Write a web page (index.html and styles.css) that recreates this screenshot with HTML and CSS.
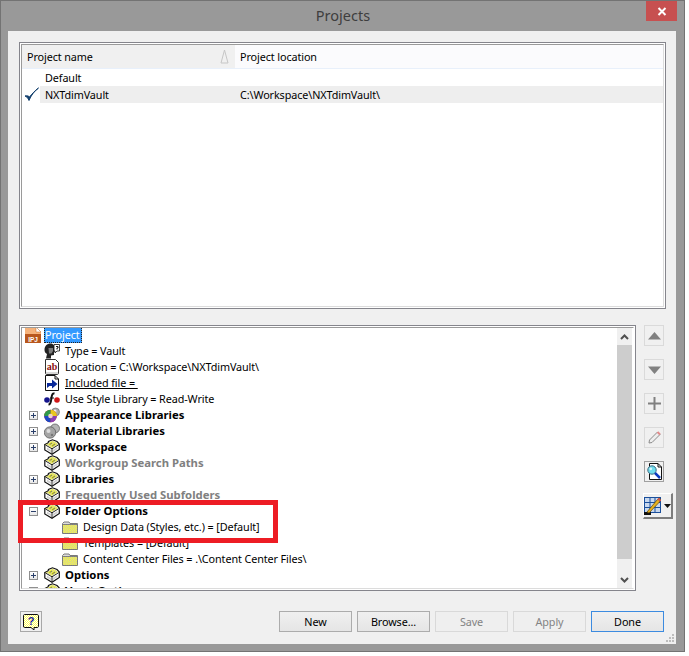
FILE: index.html
```html
<!DOCTYPE html>
<html lang="en">
<head>
<meta charset="utf-8">
<title>Projects</title>
<link rel="stylesheet" href="styles.css">
</head>
<body>
<svg class="defs" width="0" height="0" aria-hidden="true">
  <defs>
    <pattern id="dots" width="2" height="2" patternUnits="userSpaceOnUse">
      <rect width="2" height="2" fill="#ffff33"/>
      <rect width="1" height="1" fill="#c8c8a8"/>
      <rect x="1" y="1" width="1" height="1" fill="#c8c8a8"/>
    </pattern>
    <pattern id="hdots" width="2" height="2" patternUnits="userSpaceOnUse">
      <rect width="2" height="2" fill="#ffff55"/>
      <rect width="1" height="1" fill="#fff"/>
      <rect x="1" y="1" width="1" height="1" fill="#fff"/>
    </pattern>
    <symbol id="i-cube" viewBox="0 0 16 16">
      <path d="M.8 5.500 4 4 4.500 2.500 8.500 .8 13 2.500 15.300 5V10.500L8 15.300 .8 11Z" fill="#fff" stroke="#111" stroke-width="1.200"/>
      <path d="M2 5.500 5 4 5.500 3 8.500 1.800 12.500 3.500 14 5.200 8 9Z" fill="url(#dots)"/>
      <path d="M1.500 6 8 9.800V14.800M8 9.800 14.800 5.600" fill="none" stroke="#222" stroke-width="1"/>
      <path d="M3 8.500 7 11V13L3 10.800ZM9 10.800 13.500 8V10L9 13Z" fill="#d0d0d0"/>
      <path d="M5.500 5.500 8 4M8 7 11 5" stroke="#9a9a30" stroke-width="1.200"/>
    </symbol>
    <symbol id="i-folder" viewBox="0 0 16 16">
      <path d="M.5 14.500V4.500L2 3H7L8 4.500H15.500V14.500Z" fill="#dcdcdc" stroke="#7a7a7a"/>
      <rect x="1" y="6" width="14" height="8" fill="url(#dots)"/>
      <path d="M1 5.500H15" stroke="#808080"/>
    </symbol>
    <symbol id="i-ipj" viewBox="0 0 16 16">
      <path d="M0 0H11L16 5V16H0Z" fill="#f6b27a"/>
      <path d="M11 0 16 5H11Z" fill="#fff" stroke="#c06a2c" stroke-width=".5"/>
      <rect y="7" width="16" height="9" fill="#b8571d"/>
      <text x="8" y="14.500" text-anchor="middle" class="ipj-text">IPJ</text>
    </symbol>
    <symbol id="i-type" viewBox="0 0 16 16">
      <path d="M.5 7C.5 3 3 .5 6.500 .5 9.500 .5 11 3 11 6L11.500 8 10 9V12L7 12.500 7 15.500H2L3 11C1.500 10 .5 9 .5 7Z" fill="#222"/>
      <path d="M4.500 5H9V8L7.500 10.500H5Z" fill="#7d7d7d"/>
      <path d="M10 1.500H15.500V8H13L11 10V8H10Z" fill="#fff" stroke="#111" stroke-width=".8"/>
      <path d="M12 3.500H14V5H13V6.500" fill="none" stroke="#111"/>
    </symbol>
    <symbol id="i-ab" viewBox="0 0 16 16">
      <path d="M1.500.5H11.500L14.500 3.500V14C14.500 15 14 15.500 13 15.500H3C2 15.500 1.500 15 1.500 14Z" fill="#fff" stroke="#333"/>
      <path d="M2 13H14V15H2Z" fill="#d8d8d8"/>
      <text x="8" y="10.500" text-anchor="middle" class="ab-text">ab</text>
    </symbol>
    <symbol id="i-incl" viewBox="0 0 16 16">
      <path d="M1.500.5H11L14.500 4V15.500H1.500Z" fill="#fff" stroke="#111"/>
      <path d="M11 .5V4H14.500" fill="none" stroke="#111"/>
      <path d="M3 8 8 8V4.500L13.500 9 8 13.500V11H5.500L3 13Z" fill="#0a2a9a"/>
    </symbol>
    <symbol id="i-style" viewBox="0 0 16 16">
      <circle cx="3" cy="9" r="2.800" fill="#14148c"/>
      <circle cx="13" cy="9" r="2.800" fill="#d01818"/>
      <path d="M10.500 2.500C8.500 2 8 3.500 7.500 6.500 7 10 7 13.500 4.500 13.500" fill="none" stroke="#111" stroke-width="2"/>
      <path d="M6 7H10" stroke="#111"/>
    </symbol>
    <symbol id="i-appear" viewBox="0 0 16 16">
      <circle cx="11.500" cy="5" r="4" fill="#a9a9a9" stroke="#666" stroke-width=".6"/>
      <circle cx="11" cy="4" r="1.500" fill="#eee"/>
      <circle cx="6.500" cy="9" r="6.300" fill="#d8392a"/>
      <path d="M6.500 9V2.700A6.300 6.300 0 0 1 12.800 9Z" fill="#e8c81e"/>
      <path d="M6.500 9H12.800A6.300 6.300 0 0 1 6.500 15.300Z" fill="#8a3fb5"/>
      <path d="M6.500 9V15.300A6.300 6.300 0 0 1 .2 9Z" fill="#1f47c4"/>
      <path d="M6.500 9H.2A6.300 6.300 0 0 1 6.500 2.700Z" fill="#2e9a4a"/>
      <circle cx="6.500" cy="9" r="2.300" fill="#f2d0c8"/>
    </symbol>
    <symbol id="i-mat" viewBox="0 0 16 16">
      <circle cx="11" cy="5.500" r="4.500" fill="#b5b5b5" stroke="#555" stroke-width=".7"/>
      <circle cx="6" cy="9.500" r="5.700" fill="#a5a5a5" stroke="#555" stroke-width=".7"/>
      <circle cx="4.500" cy="8" r="2" fill="#ddd"/>
      <circle cx="8" cy="12" r="1.300" fill="#777"/>
    </symbol>
    <symbol id="i-help" viewBox="0 0 16 16">
      <path d="M1.500.5H14C15 .5 15.500 1 15.500 2V12C15.500 13 15 13.500 14 13.500H11V16L8 13.500H1.500C.8 13.500.5 13 .5 12V2C.5 1 .8.5 1.500.5Z" fill="url(#hdots)" stroke="#111"/>
      <text x="8" y="11" text-anchor="middle" class="help-text">?</text>
    </symbol>
  </defs>
</svg>

<div class="window">
  <header class="titlebar">
    <span class="title">Projects</span>
    <div class="close">
      <svg width="10" height="9" viewBox="0 0 10 9"><path d="M1.500 1 8.500 8M8.500 1 1.500 8" stroke="#fff" stroke-width="2"/></svg>
    </div>
  </header>

  <main class="client">
    <section class="panel list">
      <div class="panel-in">
        <div class="list-head">
          <div class="col-name">
            <span>Project name</span>
            <svg class="sort" width="9" height="15" viewBox="0 0 9 15"><path d="M1 14 4.500 1 8 14M1 14H8" fill="none" stroke="#c6c6c6"/></svg>
          </div>
          <div class="col-loc">Project location</div>
        </div>
        <div class="list-row">
          <span class="row-check"></span>
          <div class="row-body"><span class="cell-name">Default</span></div>
        </div>
        <div class="list-row">
          <span class="row-check">
            <svg width="15" height="15" viewBox="0 0 15 15"><path d="M1 9C2.500 9.500 4 11 5 13.500 7 8.500 10 4.500 14.500 1 10.500 4 8 7 5.500 10 4.500 9 3 8.500 1 9Z" fill="#123f6d" stroke="#123f6d"/></svg>
          </span>
          <div class="row-body sel"><span class="cell-name">NXTdimVault</span><span>C:\Workspace\NXTdimVault\</span></div>
        </div>
      </div>
    </section>

    <section class="mid">
      <div class="panel tree">
        <div class="panel-in tree-in">
          <div class="tree-body">
            <div class="row root"><svg class="ic"><use href="#i-ipj"/></svg><span class="hl">Project</span></div>
            <div class="row lv1"><svg class="ic"><use href="#i-type"/></svg><span class="tx">Type = Vault</span></div>
            <div class="row lv1"><svg class="ic"><use href="#i-ab"/></svg><span class="tx">Location = C:\Workspace\NXTdimVault\</span></div>
            <div class="row lv1"><svg class="ic"><use href="#i-incl"/></svg><span class="tx ul">Included file = </span></div>
            <div class="row lv1"><svg class="ic"><use href="#i-style"/></svg><span class="tx">Use Style Library = Read-Write</span></div>
            <div class="row"><span class="exp plus"></span><svg class="ic"><use href="#i-appear"/></svg><span class="tx b">Appearance Libraries</span></div>
            <div class="row"><span class="exp plus"></span><svg class="ic"><use href="#i-mat"/></svg><span class="tx b">Material Libraries</span></div>
            <div class="row"><span class="exp plus"></span><svg class="ic"><use href="#i-cube"/></svg><span class="tx b">Workspace</span></div>
            <div class="row lv1"><svg class="ic"><use href="#i-cube"/></svg><span class="tx b dim">Workgroup Search Paths</span></div>
            <div class="row"><span class="exp plus"></span><svg class="ic"><use href="#i-cube"/></svg><span class="tx b">Libraries</span></div>
            <div class="row lv1"><svg class="ic"><use href="#i-cube"/></svg><span class="tx b dim">Frequently Used Subfolders</span></div>
            <div class="row"><span class="exp"></span><svg class="ic"><use href="#i-cube"/></svg><span class="tx b">Folder Options</span></div>
            <div class="row lv2"><svg class="ic"><use href="#i-folder"/></svg><span class="tx">Design Data (Styles, etc.) = [Default]</span></div>
            <div class="row lv2"><svg class="ic"><use href="#i-folder"/></svg><span class="tx">Templates = [Default]</span></div>
            <div class="row lv2"><svg class="ic"><use href="#i-folder"/></svg><span class="tx">Content Center Files = .\Content Center Files\</span></div>
            <div class="row"><span class="exp plus"></span><svg class="ic"><use href="#i-cube"/></svg><span class="tx b">Options</span></div>
            <div class="row"><span class="exp plus"></span><svg class="ic"><use href="#i-cube"/></svg><span class="tx b">Vault Options</span></div>
          </div>
          <div class="scrollbar">
            <div class="sb-btn"><svg width="9" height="6" viewBox="0 0 9 6"><path d="M1 5 4.500 1.500 8 5" fill="none" stroke="#505050" stroke-width="2"/></svg></div>
            <div class="sb-thumb"></div>
            <div class="sb-rest"></div>
            <div class="sb-btn"><svg width="9" height="6" viewBox="0 0 9 6"><path d="M1 1 4.500 4.500 8 1" fill="none" stroke="#505050" stroke-width="2"/></svg></div>
          </div>
        </div>
      </div>

      <div class="tools">
        <div class="tool"><svg width="13" height="8" viewBox="0 0 13 8"><path d="M6.500 0 13 7.500H0Z" fill="#808080"/></svg></div>
        <div class="tool"><svg width="13" height="8" viewBox="0 0 13 8"><path d="M0 .5H13L6.500 8Z" fill="#808080"/></svg></div>
        <div class="tool"><svg width="13" height="13" viewBox="0 0 13 13"><path d="M6.500 0V13M0 6.500H13" stroke="#808080" stroke-width="2"/></svg></div>
        <div class="tool"><svg width="13" height="13" viewBox="0 0 13 13"><path d="M1 12 1.500 9 9.500 1 12 3.500 4 11.500Z" fill="#eee" stroke="#8c8c8c"/><path d="M9.500 1 12 3.500" stroke="#e28a8a" stroke-width="2"/></svg></div>
        <div class="tool strong">
          <svg width="17" height="17" viewBox="0 0 17 17">
            <path d="M3.500.5H12L15.500 4V16.500H3.500Z" fill="#fff" stroke="#111"/>
            <path d="M12 .5V4H15.500" fill="none" stroke="#111"/>
            <circle cx="6" cy="7" r="4.200" fill="#6fdcee" stroke="#3a6a80"/>
            <circle cx="4.800" cy="5.800" r="1.400" fill="#d8f8fc"/>
            <path d="M9 10 14 15" stroke="#0a3ac0" stroke-width="2.500"/>
          </svg>
        </div>
        <div class="tool drop">
          <svg width="17" height="18" viewBox="0 0 17 18">
            <rect x=".5" y=".5" width="16" height="15" fill="#c8d8ee" stroke="#1a4f9c"/>
            <path d="M1 5.500H16M1 10.500H16M6 1V15M11 1V15" stroke="#1a4f9c"/>
            <rect y="15" width="7" height="3" fill="#111"/>
            <path d="M3 15 13 3 15.500 1 16.500 3 15 5.500 5 16Z" fill="#e8b21e" stroke="#5a4208" stroke-width=".7"/>
            <path d="M14 1.500 16.500 4" stroke="#d8554a" stroke-width="2"/>
          </svg>
          <svg width="7" height="4" viewBox="0 0 7 4"><path d="M0 0H7L3.500 4Z" fill="#111"/></svg>
        </div>
      </div>
    </section>

    <footer class="foot">
      <div class="help"><svg width="16" height="16"><use href="#i-help"/></svg></div>
      <div class="actions">
        <button class="btn" type="button">New</button>
        <button class="btn" type="button">Browse...</button>
        <button class="btn off" type="button">Save</button>
        <button class="btn off" type="button">Apply</button>
        <button class="btn focus" type="button">Done</button>
      </div>
    </footer>

    <div class="callout"></div>
    <svg class="grip" width="8" height="8" viewBox="0 0 8 8"><path d="M6 0H8V2H6ZM3 3H5V5H3ZM6 3H8V5H6ZM0 6H2V8H0ZM3 6H5V8H3ZM6 6H8V8H6Z" fill="#bdbdbd"/></svg>
  </main>
</div>
</body>
</html>
```
FILE: styles.css
```css
* { box-sizing: border-box; }
html, body { margin: 0; padding: 0; background: #fff; }
body {
  width: 689px;
  height: 656px;
  overflow: hidden;
  font-family: "Noto Sans", "Open Sans", sans-serif;
  font-size: 10.8px;
  letter-spacing: -0.1px;
  color: #000;
}
.defs { position: absolute; }

.window {
  width: 685px;
  height: 652px;
  background: #999;
  border: 1px solid #737373;
  display: flex;
  flex-direction: column;
}
.titlebar {
  height: 30px;
  flex: none;
  display: flex;
  justify-content: center;
  align-items: center;
  position: relative;
}
.title { font-size: 14.500px; letter-spacing: 0; color: #3e3e3e; margin-top: -3px; margin-left: 1px; }
.close {
  position: absolute;
  top: 0;
  left: 645px;
  width: 31px;
  height: 20px;
  background: #c75050;
  display: flex;
  align-items: center;
  justify-content: center;
}

.client {
  flex: 1;
  position: relative;
  margin: 0 8px 7px 7px;
  padding: 11px 0 0 11px;
  background: #f0f0f0;
  display: flex;
  flex-direction: column;
}

.panel {
  border: 1px solid #85858c;
  background: #fff;
  padding: 1px;
}
.panel-in {
  height: 100%;
  border-style: solid;
  border-width: 1px;
  border-color: #9a9a9a #dcdcdc #dcdcdc #9a9a9a;
  background: #fff;
}
.list { width: 647px; height: 267px; flex: none; }
.list-head {
  height: 24px;
  display: flex;
  line-height: 23px;
  border-bottom: 1px solid #e8f0fb;
}
.col-name {
  width: 213px;
  background: #f0f0f0;
  padding-left: 5px;
  display: flex;
  justify-content: space-between;
  align-items: center;
  padding-right: 6px;
}
.col-loc {
  flex: 1;
  background: #fbfbfd;
  padding-left: 5px;
}
.list-row {
  height: 17px;
  display: flex;
  line-height: 17px;
}
.row-check {
  width: 18px;
  flex: none;
  display: flex;
  align-items: center;
  justify-content: center;
}
.row-body { flex: 1; display: flex; }
.row-body.sel { background: #eeeeee; }
.cell-name { width: 200px; padding-left: 5px; flex: none; }

.mid {
  display: flex;
  margin-top: 16px;
  height: 266px;
  flex: none;
}
.tree { width: 617px; flex: none; height: 100%; }
.tree-in {
  display: flex;
  border-color: #9a9a9a #fff #dcdcdc #9a9a9a;
  overflow: hidden;
}
.tree-body {
  flex: 1;
  min-width: 0;
  overflow: hidden;
  margin-top: -1px;
}
.row {
  height: 16px;
  display: flex;
  align-items: center;
  white-space: nowrap;
  line-height: 16px;
}
.root { padding-left: 3px; }
.lv1 { padding-left: 22px; }
.lv2 { padding-left: 40px; }
.ic { width: 16px; height: 16px; flex: none; }
.tx { margin-left: 5px; }
.hl {
  margin-left: 3px;
  padding: 0 2px 0 1px;
  background: #3399ff;
  color: #fff;
  outline: 1px dotted #222;
  outline-offset: -1px;
}
.ul { text-decoration: underline; white-space: pre; }
.b { font-weight: 700; font-size: 11.300px; letter-spacing: 0; }
.dim { color: #808080; }
.exp {
  width: 9px;
  height: 9px;
  margin: 0 6px 0 7px;
  flex: none;
  border: 1px solid #8f8f8f;
  background: linear-gradient(#fff, #e8e8e8);
  position: relative;
}
.exp::before {
  content: "";
  position: absolute;
  left: 1px;
  top: 3px;
  width: 5px;
  height: 1px;
  background: #2a3f6a;
}
.exp.plus::after {
  content: "";
  position: absolute;
  left: 3px;
  top: 1px;
  width: 1px;
  height: 5px;
  background: #2a3f6a;
}
.ipj-text { font: 700 6.500px "Liberation Sans", sans-serif; fill: #fff; }
.ab-text { font: 700 10px "Liberation Serif", serif; fill: #8c1010; }
.help-text { font: 700 11px "Liberation Sans", sans-serif; fill: #1a1a9a; }

.scrollbar {
  width: 15px;
  margin-right: 1px;
  flex: none;
  display: flex;
  flex-direction: column;
  background: #f0f0f0;
}
.sb-btn {
  height: 17px;
  flex: none;
  display: flex;
  align-items: center;
  justify-content: center;
}
.sb-thumb { height: 214px; flex: none; background: #cdcdcd; }
.sb-rest { flex: 1; }

.tools {
  margin-left: 8px;
  display: flex;
  flex-direction: column;
  gap: 13px;
  align-items: flex-start;
}
.tool {
  width: 20px;
  height: 21px;
  border: 1px solid #dadada;
  display: flex;
  align-items: center;
  justify-content: center;
}
.tool.strong { border-color: #a0a0a0; width: 20px; }
.tool.drop {
  width: 30px;
  height: 26px;
  margin-left: -1px;
  margin-top: -2px;
  gap: 3px;
  border-width: 1px 2px 2px 1px;
  border-color: #fff #7d7d7d #7d7d7d #fff;
}

.foot {
  margin-top: 20px;
  height: 21px;
  display: flex;
  justify-content: space-between;
  padding-right: 12px;
}
.help {
  width: 22px;
  height: 21px;
  margin-left: 1px;
  border: 1px solid #a8a8a8;
  display: flex;
  align-items: center;
  justify-content: center;
}
.actions { display: flex; gap: 5px; }
.btn {
  width: 73px;
  height: 21px;
  padding: 0;
  font: inherit;
  letter-spacing: inherit;
  color: #000;
  border: 1px solid #acacac;
  background: linear-gradient(#f0f0f0, #e5e5e5);
}
.btn.off { color: #838383; background: #efefef; border-color: #d9d9d9; }
.btn.focus { border-color: #3c8be0; }

.callout {
  position: absolute;
  left: 10px;
  top: 469px;
  width: 260px;
  height: 43px;
  border: 5px solid #ed1c24;
  pointer-events: none;
}
.grip { position: absolute; right: 2px; bottom: 2px; }
```
